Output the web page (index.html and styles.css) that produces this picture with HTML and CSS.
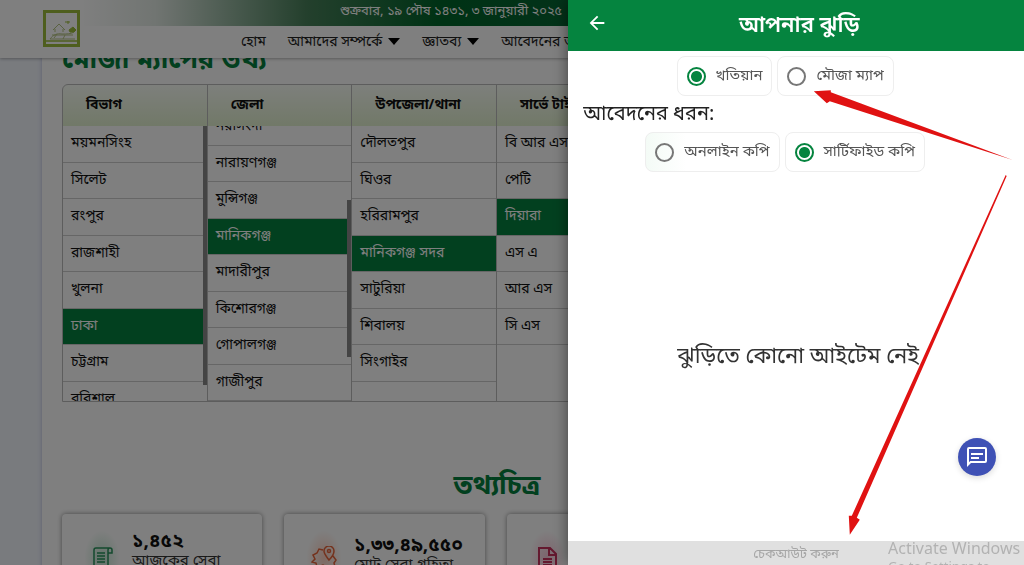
FILE: index.html
```html
<!DOCTYPE html>
<html lang="bn">
<head>
<meta charset="utf-8">
<meta name="viewport" content="width=device-width, initial-scale=1">
<title>আপনার ঝুড়ি</title>
<link rel="stylesheet" href="styles.css">
</head>
<body>
<div class="page">
  <header class="site-header">
    <a class="logo" href="#" aria-label="হোম">
      <svg viewBox="0 0 38 38" width="38" height="38" fill="none" stroke="#b5c483">
        <rect x="2.500" y="1.500" width="34" height="34" stroke="#9dbd3c" stroke-width="3"/>
        <path d="M4 31h31" stroke="#9dbd3c" stroke-width="1.500"/>
        <path d="M11 20l6-6 6 6M13 19v3M21 19v3M8 29c3-4 7-6 12-5 5 0 9 0 12-2M8 29h25M10 25h21M12 28l3-4M21 29l2-4"/>
        <path d="M26 14v-3M23 12h5M27 20l4-3 3 3-2 2h-4z" fill="#9dbd3c" stroke="#9dbd3c"/>
      </svg>
    </a>
    <div class="header-main">
      <div class="date-bar">শুক্রবার, ১৯ পৌষ ১৪৩১, ৩ জানুয়ারী ২০২৫</div>
      <nav class="nav">
        <a href="#">হোম</a>
        <a href="#">আমাদের সম্পর্কে <span class="caret"></span></a>
        <a href="#">জ্ঞাতব্য <span class="caret"></span></a>
        <a href="#">আবেদনের অবস্থা</a>
      </nav>
    </div>
  </header>

  <main class="sheet">
    <h1 class="page-title">মৌজা ম্যাপের তথ্য</h1>
    <section class="picker">
      <div class="column">
        <h2>বিভাগ</h2>
        <div class="list">
          <button>ময়মনসিংহ</button><button>সিলেট</button><button>রংপুর</button><button>রাজশাহী</button><button>খুলনা</button><button class="selected">ঢাকা</button><button>চট্টগ্রাম</button><button>বরিশাল</button>
          <span class="thumb thumb-top"></span>
        </div>
      </div>
      <div class="column">
        <h2>জেলা</h2>
        <div class="list scrolled">
          <button>নরসিংদী</button><button>নারায়ণগঞ্জ</button><button>মুন্সিগঞ্জ</button><button class="selected">মানিকগঞ্জ</button><button>মাদারীপুর</button><button>কিশোরগঞ্জ</button><button>গোপালগঞ্জ</button><button>গাজীপুর</button>
          <span class="thumb thumb-middle"></span>
        </div>
      </div>
      <div class="column">
        <h2>উপজেলা/থানা</h2>
        <div class="list">
          <button>দৌলতপুর</button><button>ঘিওর</button><button>হরিরামপুর</button><button class="selected">মানিকগঞ্জ সদর</button><button>সাটুরিয়া</button><button>শিবালয়</button><button>সিংগাইর</button>
        </div>
      </div>
      <div class="column">
        <h2>সার্ভে টাইপ</h2>
        <div class="list">
          <button>বি আর এস</button><button>পেটি</button><button class="selected">দিয়ারা</button><button>এস এ</button><button>আর এস</button><button>সি এস</button>
        </div>
      </div>
    </section>

    <h2 class="section-title">তথ্যচিত্র</h2>
    <section class="stats">
      <article class="stat">
        <span class="stat-icon green">
          <svg viewBox="0 0 24 24" width="24" height="24" fill="none" stroke="currentColor" stroke-width="1.500"><path d="M4 21V4a2 2 0 0 1 2-2h14a2 2 0 0 1 2 2v3h-4M18 7V4a2 2 0 0 1 2-2M18 7v14H4M7 7h8M7 10h8M7 13h8M7 16h8"/></svg>
        </span>
        <p><strong>১,৪৫২</strong><span>আজকের সেবা</span></p>
      </article>
      <article class="stat stat-total">
        <span class="stat-icon orange">
          <svg viewBox="0 0 26 24" width="26" height="24" fill="none" stroke="currentColor" stroke-width="1.500"><path d="M12 4L8 3 6 7 2 9l2 4-3 3 4 1 1 4M18 14c-3-4-5-6-5-9a5 5 0 0 1 10 0c0 3-2 6-5 9zM22 10l3 4-2 3 1 4M7 21l5-2 5 3 6-1"/><circle cx="18" cy="5" r="1.500"/></svg>
        </span>
        <p><strong>১,৩৩,৪৯,৫৫০</strong><span>মোট সেবা গ্রহিতা</span></p>
      </article>
      <article class="stat">
        <span class="stat-icon pink">
          <svg viewBox="0 0 24 24" width="24" height="24" fill="none" stroke="currentColor" stroke-width="2"><path d="M4 2h11l6 6v15H4zM14 2v7h7M8 13h9M8 16h9M8 19h9"/></svg>
        </span>
      </article>
    </section>
  </main>
</div>

<div class="backdrop"></div>

<aside class="drawer">
  <header class="drawer-header">
    <button class="back" aria-label="ফিরে যান">
      <svg viewBox="0 0 24 24" width="22" height="22" fill="#fff"><path d="M20 11H7.800l5.600-5.600L12 4l-8 8 8 8 1.400-1.400L7.800 13H20z"/></svg>
    </button>
    <h2>আপনার ঝুড়ি</h2>
  </header>
  <div class="options">
    <label class="option"><input type="radio" name="item" checked><span>খতিয়ান</span></label>
    <label class="option"><input type="radio" name="item"><span>মৌজা ম্যাপ</span></label>
  </div>
  <h3 class="group-title">আবেদনের ধরন:</h3>
  <div class="options">
    <label class="option hovered"><input type="radio" name="kind"><span>অনলাইন কপি</span></label>
    <label class="option"><input type="radio" name="kind" checked><span>সার্টিফাইড কপি</span></label>
  </div>
  <p class="empty">ঝুড়িতে কোনো আইটেম নেই</p>
  <button class="checkout" disabled>চেকআউট করুন</button>
  <p class="watermark">Activate Windows<span>Go to Settings to</span></p>
  <button class="chat" aria-label="বার্তা">
    <svg viewBox="0 0 24 24" width="24" height="24" fill="#fff"><path d="M4 4h16v12H5.200L4 17.200zm0-2a2 2 0 0 0-2 2v18l4-4h14a2 2 0 0 0 2-2V4a2 2 0 0 0-2-2zm2 10h8v2H6zm0-4h12v2H6z"/></svg>
  </button>
  <svg class="arrows" viewBox="568 0 456 565" aria-hidden="true">
    <path fill="#e01212" d="M814 91l17-1v2l182 68-183-59-3 2z"/>
    <path fill="#e01212" d="M850 535l-1-19h3L1006 175l1 1L857 518l3 2z"/>
  </svg>
</aside>
</body>
</html>
```
FILE: styles.css
```css
* { box-sizing: border-box; }
body {
  margin: 0;
  height: 100vh;
  overflow: hidden;
  font-family: "Noto Sans", "Noto Sans Bengali", "Lohit Bengali", sans-serif;
  color: #111;
  background: #f2f6fd;
}
h1, h2, h3, p { margin: 0; }
button { font: inherit; border: 0; cursor: pointer; }

.page { position: relative; z-index: 0; height: 100%; overflow: hidden; }
.site-header {
  position: relative;
  z-index: 1;
  display: flex;
  height: 58px;
  padding-left: 42px;
  background: #fff;
  box-shadow: 0 1px 3px rgba(0, 0, 0, .3);
}
.logo { padding-top: 10px; }
.header-main { flex: 1; white-space: nowrap; }
.date-bar {
  height: 26px;
  padding-left: 260px;
  font-size: 13px;
  line-height: 20px;
  color: #fff;
  background: linear-gradient(90deg, #fff 0, #e2eae4 8%, #48805a 24%, #00642a 38%, #0a6637 60%);
}
.nav { display: flex; gap: 22px; padding-left: 161px; }
.nav a {
  display: flex;
  align-items: center;
  gap: 6px;
  color: #222;
  font-size: 14px;
  line-height: 30px;
  text-decoration: none;
}
.caret { border: 6px solid transparent; border-top: 7px solid #000; border-bottom: 0; }

.sheet {
  margin: 0 72px 0 42px;
  padding: 0 20px;
  min-height: 100%;
  background: #fff;
  box-shadow: 0 0 4px rgba(60, 60, 160, .3);
}
.page-title, .section-title { color: #05803f; font-size: 27px; line-height: 32px; }
.page-title { margin-top: -16px; padding-bottom: 10px; height: 42px; }
.picker {
  display: grid;
  grid-template-columns: repeat(6, 1fr);
  height: 318px;
  border: 1px solid #bbb;
  border-radius: 6px 6px 0 0;
  background: linear-gradient(#fbfff8, #e3f2d0) 0 0 / 100% 41px no-repeat;
  overflow: hidden;
}
.column { display: flex; flex-direction: column; min-height: 0; border-right: 1px solid #bbb; }
.column h2 { flex: none; height: 41px; padding: 0 23px; font-size: 14px; line-height: 37px; white-space: nowrap; }
.list { position: relative; flex: 1; min-height: 0; display: flex; flex-direction: column; overflow: hidden; }
.scrolled { justify-content: flex-end; }
.list button {
  flex: none;
  height: 37px;
  padding: 0 8px 4px;
  border-bottom: 1px solid #ccc;
  background: #fff;
  color: #111;
  font-size: 14px;
  line-height: 32px;
  text-align: left;
  white-space: nowrap;
}
.list button:nth-child(even) { height: 36px; }
.list .selected { background: #05803f; color: #fff; }
.thumb { position: absolute; right: 0; width: 4px; background: #888; }
.thumb-top { top: 0; height: 94%; }
.thumb-middle { top: 27%; height: 57%; }

.section-title { margin-top: 66px; text-align: center; }
.stats { display: grid; grid-template-columns: repeat(4, 1fr); gap: 22px; margin-top: 14px; padding-right: 3px; }
.stat {
  display: flex;
  gap: 12px;
  height: 100px;
  padding: 16px 22px;
  border-radius: 4px;
  background: #fff;
  box-shadow: 0 0 5px rgba(0, 0, 0, .45);
  white-space: nowrap;
}
.stat-icon { display: grid; place-items: center; flex: none; width: 36px; height: 56px; border-radius: 50%; }
.green { color: #27935b; background: radial-gradient(#c4e6d2, #fff 70%); }
.orange { color: #e8643a; background: radial-gradient(#ffd3c4, #fff 70%); }
.pink { color: #c8325f; background: radial-gradient(#fac8da, #fff 70%); }
.stat strong, .stat p span { display: block; }
.stat strong { font-size: 19px; line-height: 20px; }
.stat p span { font-size: 15px; line-height: 18px; color: #333; }
.stat-total p { padding-top: 4px; }

.backdrop { position: fixed; z-index: 1; inset: 0; background: rgba(0, 0, 0, .5); }
.drawer {
  position: fixed;
  z-index: 2;
  inset: 0 0 0 auto;
  display: flex;
  flex-direction: column;
  width: 44.5%;
  background: #fff;
  box-shadow: 0 0 14px rgba(0, 0, 0, .5);
}
.drawer-header { display: flex; align-items: center; height: 51px; padding: 0 14px 5px 18px; background: #05843f; color: #fff; }
.drawer-header h2 { flex: 1; padding-right: 20px; font-size: 22px; font-weight: 600; line-height: 28px; text-align: center; }
.back { display: flex; padding: 0; background: none; }
.options { display: flex; justify-content: center; gap: 5px; padding: 5px 22px 0 0; }
.option {
  display: flex;
  align-items: center;
  gap: 10px;
  height: 40px;
  padding: 0 9px;
  border: 1px solid #eee;
  border-radius: 8px;
  color: #555;
  font-size: 15px;
  line-height: 20px;
}
.option span { padding-bottom: 4px; }
.option input {
  appearance: none;
  width: 19px;
  height: 19px;
  margin: 0;
  border: 2px solid #777;
  border-radius: 50%;
}
.option input:checked { border-color: #05843f; background: radial-gradient(#05843f 0 5px, #fff 6px); }
.hovered { background: linear-gradient(90deg, #f4fbf6, #fff 30%); }
.group-title { padding: 3px 15px 1px; font-size: 20px; font-weight: 400; line-height: 27px; color: #222; }
.empty { flex: 1; display: flex; align-items: center; justify-content: center; padding: 0 0 6px 4px; color: #333; font-size: 22px; line-height: 30px; }
.checkout { height: 24px; background: #e0e0e0; color: #a6a6a6; font-size: 13px; line-height: 20px; }
.watermark {
  position: absolute;
  right: 0;
  bottom: 0;
  width: 136px;
  height: 28px;
  overflow: hidden;
  color: #b2b2b2;
  font-size: 16px;
  line-height: 22px;
  white-space: nowrap;
}
.watermark span { display: block; font-size: 13px; line-height: 14px; }
.chat {
  position: absolute;
  right: 28px;
  bottom: 89px;
  display: grid;
  place-items: center;
  width: 38px;
  height: 38px;
  padding: 0;
  border-radius: 50%;
  background: #3f51b5;
  box-shadow: 0 2px 6px rgba(0, 0, 0, .15);
}
.arrows { position: absolute; inset: 0; width: 100%; height: 100%; pointer-events: none; }
```
